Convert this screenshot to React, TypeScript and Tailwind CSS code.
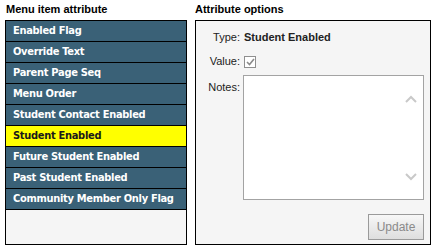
import React from "react";

const items = [
  "Enabled Flag",
  "Override Text",
  "Parent Page Seq",
  "Menu Order",
  "Student Contact Enabled",
  "Student Enabled",
  "Future Student Enabled",
  "Past Student Enabled",
  "Community Member Only Flag",
];

const Chevron = ({ up }: { up?: boolean }) => (
  <svg width="12" height="8" viewBox="0 0 12 8" className="block">
    <path
      d={up ? "M1 7 L6 2 L11 7" : "M1 1 L6 6 L11 1"}
      fill="none"
      stroke="#c9c9c9"
      strokeWidth="2"
    />
  </svg>
);

export default function App() {
  return (
    <div className="w-[438px] h-[252px] bg-white flex gap-[8px] pl-[5px] font-['Liberation_Sans',Arial,sans-serif] text-[11px]">
      {/* left column */}
      <div className="flex flex-col w-[182px]">
        <h2 className="h-[20px] pt-[3px] pl-[1px] leading-[13px] font-bold text-black">
          Menu item attribute
        </h2>
        <div className="h-[225px] border border-black bg-[#f5f5f5]">
          {items.map((item) => {
            const active = item === "Student Enabled";
            return (
              <div
                key={item}
                className={`h-[21px] border-b border-black pl-[7px] flex items-center whitespace-nowrap font-['DejaVu_Sans_Condensed','DejaVu_Sans',Tahoma,sans-serif] font-bold text-[11px] tracking-[-0.3px] ${
                  active ? "bg-[#ffff00] text-[#1a1a1a]" : "bg-[#3a6177] text-white"
                }`}
              >
                {item}
              </div>
            );
          })}
        </div>
      </div>

      {/* right column */}
      <div className="flex flex-col w-[236px]">
        <h2 className="h-[20px] pt-[3px] leading-[13px] font-bold text-black">
          Attribute options
        </h2>
        <div className="h-[225px] border border-black bg-[#f5f5f5] flex flex-col text-[#222]">
          <div className="flex items-center mt-[10px] h-[13px] leading-[13px]">
            <span className="w-[44px] text-right">Type:</span>
            <span className="ml-[4px] font-bold">Student Enabled</span>
          </div>
          <div className="flex items-center mt-[11px] h-[13px] leading-[13px]">
            <span className="w-[44px] text-right">Value:</span>
            <span className="ml-[4px] w-[12px] h-[12px] border border-[#8f8f8f] bg-white flex items-center justify-center">
              <svg width="9" height="8" viewBox="0 0 9 8">
                <path d="M1 4 L3.5 6.5 L8 1" fill="none" stroke="#8a8a8a" strokeWidth="1.6" />
              </svg>
            </span>
          </div>
          <div className="flex mt-[7px]">
            <span className="w-[44px] text-right pt-[6px] leading-[13px]">Notes:</span>
            <div className="ml-[3px] w-[181px] h-[125px] border border-[#a3a3a3] bg-white flex flex-col items-end justify-between pr-[6px] pt-[19px] pb-[18px]">
              <Chevron up />
              <Chevron />
            </div>
          </div>
          <div className="flex justify-end pr-[6px] mt-[14px]">
            <button className="w-[56px] h-[26px] border border-[#9a9a9a] bg-gradient-to-b from-[#f7f7f7] to-[#dedede] text-[#8a8a8a] text-[12px]">
              Update
            </button>
          </div>
        </div>
      </div>
    </div>
  );
}
